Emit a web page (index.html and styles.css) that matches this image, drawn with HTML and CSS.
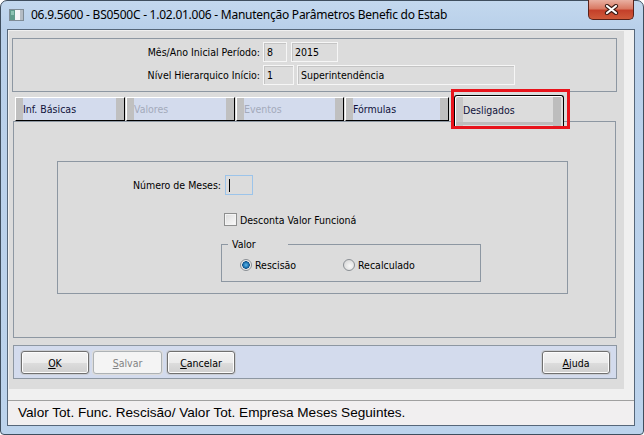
FILE: index.html
```html
<!DOCTYPE html>
<html lang="pt">
<head>
    <meta charset="UTF-8">
    <title>Manutenção Parâmetros Benefic do Estab</title>
    <link rel="stylesheet" href="styles.css">
</head>
<body>
    <div class="window">
        <div class="titlebar">
            <svg class="app-icon" width="15" height="12" viewBox="0 0 15 12">
                <rect x="0.5" y="0.5" width="14" height="11" fill="#f4f6f8" stroke="#7f8c96"/>
                <rect x="1" y="1" width="5" height="10" fill="#5f9c8c"/>
                <rect x="2" y="2" width="3" height="4" fill="#8cc4b4"/>
                <rect x="11" y="1" width="3" height="10" fill="#b4bcc4"/>
            </svg>
            <span class="title">06.9.5600 - BS0500C - 1.02.01.006 - Manutenção Parâmetros Benefic do Estab</span>
            <div class="close-btn">
                <svg width="15" height="11" viewBox="0 0 15 11">
                    <path d="M3 2 L12 9 M12 2 L3 9" stroke="#3b1a14" stroke-width="4.2" stroke-linecap="round"/>
                    <path d="M3 2 L12 9 M12 2 L3 9" stroke="#ffffff" stroke-width="2.2" stroke-linecap="round"/>
                </svg>
            </div>
        </div>

        <div class="client">
            <div class="main">
                <div class="header-box">
                    <label>Mês/Ano Inicial Período:</label>
                    <div class="fields gap4">
                        <span class="field w24">8</span>
                        <span class="field w47">2015</span>
                    </div>
                    <label>Nível Hierarquico Início:</label>
                    <div class="fields gap3">
                        <span class="field w31">1</span>
                        <span class="field w218">Superintendência</span>
                    </div>
                </div>

                <div class="tabs">
                    <div class="tab w110">Inf. Básicas</div>
                    <div class="tab w109 disabled">Valores</div>
                    <div class="tab w108 disabled">Eventos</div>
                    <div class="tab w104">Fórmulas</div>
                    <div class="tab active">Desligados</div>
                </div>

                <div class="tab-pane">
                    <div class="group">
                        <div class="num-row">
                            <label>Número de Meses:</label>
                            <span class="field focus w28"><span class="caret"></span></span>
                        </div>
                        <div class="check-row">
                            <span class="checkbox"></span>
                            <span>Desconta Valor Funcioná</span>
                        </div>
                        <fieldset class="valor">
                            <legend>Valor</legend>
                            <div class="radio-row">
                                <span class="radio-item first"><span class="radio checked"></span>Rescisão</span>
                                <span class="radio-item"><span class="radio"></span>Recalculado</span>
                            </div>
                        </fieldset>
                    </div>
                </div>

                <div class="button-bar">
                    <button class="btn"><u>O</u>K</button>
                    <button class="btn salvar" disabled><u>S</u>alvar</button>
                    <button class="btn cancelar"><u>C</u>ancelar</button>
                    <button class="btn ajuda"><u>A</u>juda</button>
                </div>
            </div>

            <div class="status">Valor Tot. Func. Rescisão/ Valor Tot. Empresa Meses Seguintes.</div>
        </div>

        <div class="highlight"></div>
    </div>
</body>
</html>
```

FILE: styles.css
```css
body {
    margin: 0;
    background: #ffffff;
}
.window {
    position: relative;
    width: 644px;
    height: 435px;
    box-sizing: border-box;
    border: 1px solid #3f4e5e;
    border-radius: 7px 7px 4px 4px;
    background: linear-gradient(to bottom, #c3d8ee 0, #b9d0ea 28px, #bcd3ec 100%);
    font-family: "DejaVu Sans Condensed", "DejaVu Sans", sans-serif;
    font-stretch: condensed;
    font-size: 10.5px;
    color: #000;
}

/* barra de título */
.titlebar {
    height: 28px;
    display: flex;
    align-items: flex-start;
}
.app-icon {
    margin: 8px 0 0 8px;
}
.title {
    margin: 5px 0 0 7px;
    font-family: "Noto Sans", sans-serif;
    font-stretch: normal;
    font-size: 12px;
    letter-spacing: -0.25px;
    color: #000;
}
.close-btn {
    margin: -1px 9px 0 auto;
    width: 46px;
    height: 20px;
    box-sizing: border-box;
    border: 1px solid #5a2219;
    border-top: none;
    border-radius: 0 0 5px 5px;
    background: linear-gradient(to bottom, #e9b0a2 0%, #d97a64 45%, #c4402a 55%, #cf5a3a 100%);
    display: flex;
    align-items: center;
    justify-content: center;
}

/* área cliente */
.client {
    margin: 0 8px 0 6px;
    height: 397px;
    box-sizing: border-box;
    border: 1px solid #56677a;
    background: #f0f0f0;
}
.main {
    margin: 1px 10px 0 1px;
    height: 358px;
    background: #dcdcdc;
    overflow: hidden;
}
.header-box {
    margin: 7px 0 0 3px;
    width: 605px;
    height: 54px;
    box-sizing: border-box;
    border: 1px solid #8d97a2;
    padding-top: 3px;
    display: grid;
    grid-template-columns: 247px auto;
    column-gap: 3px;
    row-gap: 3px;
    grid-auto-rows: 20px;
}
.header-box label {
    text-align: right;
    line-height: 20px;
}
.fields {
    display: flex;
}
.gap4 { gap: 4px; }
.gap3 { gap: 3px; }
.field {
    display: block;
    height: 20px;
    box-sizing: border-box;
    border: 1px solid #f6f6f6;
    box-shadow: inset 1px 1px 0 #c4c4c4;
    padding-left: 3px;
    line-height: 18px;
    white-space: nowrap;
}
.w24 { width: 24px; }
.w28 { width: 28px; }
.w31 { width: 31px; }
.w47 { width: 47px; }
.w218 { width: 218px; }

/* abas */
.tabs {
    position: relative;
    z-index: 1;
    margin: 5px 0 0 6px;
    height: 24px;
    display: flex;
    align-items: flex-end;
}
.tab {
    height: 24px;
    box-sizing: border-box;
    margin-right: 1px;
    border-top: 1px solid #fff;
    border-left: 1px solid #fff;
    border-right: 1px solid #000;
    border-bottom: 1px solid #000;
    background: linear-gradient(to right, #c0c0c0 7px, #d3dbed 7px, #d3dbed calc(100% - 8px), #c0c0c0 calc(100% - 8px));
    padding-left: 7px;
    line-height: 22px;
    color: #10123a;
}
.tab.w110 { width: 110px; }
.tab.w109 { width: 109px; }
.tab.w108 { width: 108px; }
.tab.w104 { width: 104px; }
.tab.disabled {
    color: #a3aabb;
}
.tab.active {
    width: 110px;
    height: 31px;
    margin: 0 0 -5px 4px;
    border: 1px solid #000;
    border-bottom: none;
    border-radius: 3px 3px 0 0;
    box-shadow: inset 1px 1px 0 #fff;
    background:
        linear-gradient(#bdbdbd, #bdbdbd) 1px 26px / calc(100% - 3px) 3px no-repeat,
        linear-gradient(to right, #dcdcdc 1px, #c8c8c8 1px, #c8c8c8 8px, #dcdcdc 8px, #dcdcdc calc(100% - 10px), #bdbdbd calc(100% - 10px), #bdbdbd calc(100% - 2px), #dcdcdc calc(100% - 2px));
    padding: 4px 0 0 8px;
    line-height: 20px;
}

.tab-pane {
    margin-left: 4px;
    width: 603px;
    height: 217px;
    box-sizing: border-box;
    border: 1px solid #8d97a2;
    padding: 39px 0 0 43px;
}
.group {
    width: 511px;
    height: 133px;
    box-sizing: border-box;
    border: 1px solid #8d97a2;
    padding-top: 13px;
}
.num-row {
    display: flex;
    align-items: center;
    height: 20px;
}
.num-row label {
    width: 163px;
    margin-right: 4px;
    text-align: right;
}
.field.focus {
    border-color: #9cc4ea;
    box-shadow: none;
}
.caret {
    display: block;
    margin: 3px 0 0 0;
    width: 1px;
    height: 13px;
    background: #000;
}
.check-row {
    margin-top: 17px;
    height: 15px;
    padding-left: 166px;
    display: flex;
    align-items: center;
    gap: 3px;
}
.checkbox {
    width: 13px;
    height: 13px;
    box-sizing: border-box;
    border: 1px solid #8e8f8f;
    background: linear-gradient(135deg, #dcdcdc, #fbfbfb);
    box-shadow: inset 0 0 0 1px #f4f4f4;
}
fieldset.valor {
    margin: 10px 0 0 163px;
    width: 260px;
    height: 45px;
    box-sizing: border-box;
    padding: 0;
    border: 1px solid #8d97a2;
}
fieldset.valor legend {
    margin-left: 6px;
    width: 60px;
    box-sizing: border-box;
    padding: 0 0 0 4px;
    line-height: 14px;
}
.radio-row {
    display: flex;
    align-items: center;
    height: 14px;
    margin-top: 7px;
    padding-left: 18px;
}
.radio-item {
    display: flex;
    align-items: center;
    gap: 3px;
}
.radio-item.first {
    width: 103px;
}
.radio {
    width: 12px;
    height: 12px;
    box-sizing: border-box;
    border-radius: 50%;
    border: 1px solid #8a8f94;
    background: radial-gradient(circle at 60% 60%, #f8f8f8 0, #dcdcdc 70%);
}
.radio.checked {
    background: radial-gradient(circle, #5fb6e8 0, #1f76b4 2.5px, #0e4e86 3.5px, #e6e6e6 4px, #f6f6f6 100%);
}

/* botões */
.button-bar {
    margin: 7px 0 0 4px;
    width: 604px;
    height: 34px;
    box-sizing: border-box;
    border: 1px solid #8d97a2;
    background: #d3dbed;
    padding: 5px 6px 0 7px;
    display: flex;
}
.btn {
    width: 68px;
    height: 23px;
    border: 1px solid #707070;
    border-radius: 3px;
    box-shadow: 0 0 0 1px #c9cdd4, inset 0 0 0 1px #fcfcfc;
    background: linear-gradient(to bottom, #f2f2f2 0, #ebebeb 50%, #dddddd 50%, #cfcfcf 100%);
    font-family: "DejaVu Sans Condensed", "DejaVu Sans", sans-serif;
    font-stretch: condensed;
    font-size: 10.5px;
    color: #000;
    padding: 0;
}
.btn.salvar {
    width: 69px;
    margin-left: 4px;
    border-color: #adb2b5;
    background: #f4f4f4;
    color: #838383;
    box-shadow: 0 0 0 1px #dcdcdc;
}
.btn.cancelar {
    margin-left: 5px;
}
.btn.ajuda {
    margin-left: auto;
}

/* barra de status */
.status {
    margin-top: 11px;
    height: 25px;
    box-sizing: border-box;
    border-top: 1px solid #a0a0a0;
    background: #f1eff0;
    padding-left: 10px;
    font-family: "Liberation Sans", Arial, sans-serif;
    font-stretch: normal;
    font-size: 13.6px;
    line-height: 23px;
    color: #000;
}

/* marcação vermelha sobre a aba */
.highlight {
    position: absolute;
    left: 450px;
    top: 88px;
    width: 119px;
    height: 40px;
    box-sizing: border-box;
    border: 3px solid #e8141c;
}
```
